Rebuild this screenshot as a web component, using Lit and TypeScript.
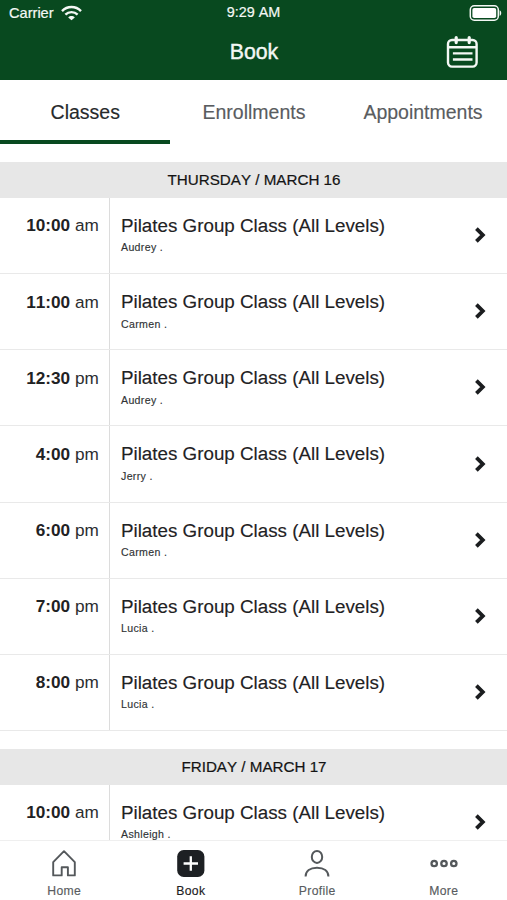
import { LitElement, html, css, svg } from "lit";
import { customElement, property } from "lit/decorators.js";
import { classMap } from "lit/directives/class-map.js";

interface Session {
  time: string;
  period: string;
  teacher: string;
}

const thursday: Session[] = [
  { time: "10:00", period: "am", teacher: "Audrey ." },
  { time: "11:00", period: "am", teacher: "Carmen ." },
  { time: "12:30", period: "pm", teacher: "Audrey ." },
  { time: "4:00", period: "pm", teacher: "Jerry ." },
  { time: "6:00", period: "pm", teacher: "Carmen ." },
  { time: "7:00", period: "pm", teacher: "Lucia ." },
  { time: "8:00", period: "pm", teacher: "Lucia ." },
];
const friday: Session[] = [{ time: "10:00", period: "am", teacher: "Ashleigh ." }];

@customElement("class-row")
class ClassRow extends LitElement {
  @property({ attribute: false }) session!: Session;

  static styles = css`
    :host {
      display: flex;
      height: 76.15px;
      box-sizing: border-box;
      border-bottom: 1px solid #e9e9e9;
      color: #1f2224;
    }
    .time {
      width: 110px;
      box-sizing: border-box;
      border-right: 1px solid #dcdcdc;
      padding: 16.4px 10.2px 0 0;
      text-align: right;
      font-size: 17.2px;
      line-height: 22px;
      color: #2b2d2f;
      white-space: nowrap;
    }
    .time b {
      color: #1f2224;
    }
    .info {
      flex: 1;
      padding: 16px 0 0 11px;
      white-space: nowrap;
    }
    .name {
      font-size: 18.8px;
      line-height: 24px;
      -webkit-text-stroke: 0.15px;
    }
    .teacher {
      margin-top: 2.4px;
      font-size: 10.6px;
      line-height: 14px;
      letter-spacing: 0.33px;
      color: #303335;
      -webkit-text-stroke: 0.15px;
    }
    .chevron {
      width: 12px;
      height: 18px;
      margin: 28.2px 21px 0 0;
    }
  `;

  render() {
    return html`
      <div class="time"><b>${this.session.time}</b> ${this.session.period}</div>
      <div class="info">
        <div class="name">Pilates Group Class (All Levels)</div>
        <div class="teacher">${this.session.teacher}</div>
      </div>
      <svg class="chevron" viewBox="0 0 12 18">
        <path d="M2.4 2.7 8.8 9 2.4 15.3" fill="none" stroke="#1b1d1f" stroke-width="3.8" />
      </svg>
    `;
  }
}

const homeIcon = svg`<path d="M4.2 13.2 15 2.2l10.8 11v13.2h-6.9v-8.2h-6.2v8.2H4.2z" fill="none" stroke="#54585b" stroke-width="1.9" stroke-linejoin="round"/>`;
const bookIcon = svg`<rect x="1.2" y="1" width="27.2" height="27" rx="6.5" fill="#1d2023"/><path d="M14.8 7.3v14.4M7.6 14.5H22" stroke="#fff" stroke-width="2.3"/>`;
const profileIcon = svg`<g fill="none" stroke="#54585b" stroke-width="2"><ellipse cx="15" cy="7.9" rx="5.2" ry="6"/><path d="M3.6 27.6c0-5.6 4.4-8.8 11.4-8.8s11.4 3.2 11.4 8.8"/></g>`;
const moreIcon = svg`<g fill="none" stroke="#54585b" stroke-width="2.3"><circle cx="5.2" cy="14.5" r="2.7"/><circle cx="15" cy="14.5" r="2.7"/><circle cx="24.8" cy="14.5" r="2.7"/></g>`;

@customElement("app-root")
class AppRoot extends LitElement {
  static styles = css`
    :host {
      display: flex;
      flex-direction: column;
      height: 900px;
      overflow: hidden;
      background: #fff;
      font-family: "Liberation Sans", Arial, sans-serif;
      font-kerning: none;
    }
    .header {
      flex: none;
      height: 80px;
      background: #08491f;
      color: #f4f8f5;
    }
    .status,
    .title-bar {
      display: grid;
      grid-template-columns: 1fr auto 1fr;
      align-items: center;
    }
    .status {
      height: 24px;
      padding: 1px 4px 0 9px;
      font-size: 14.4px;
      -webkit-text-stroke: 0.2px;
    }
    .clock {
      padding: 0 5px 2px 0;
    }
    .carrier {
      display: flex;
      align-items: center;
      gap: 7px;
      font-size: 14.6px;
    }
    .wifi {
      width: 21px;
      height: 16px;
    }
    .battery {
      width: 34px;
      height: 18px;
      justify-self: end;
    }
    .title-bar {
      height: 54px;
      padding-right: 28px;
      padding-left: 29px;
    }
    .title {
      grid-column: 2;
      font-size: 21.3px;
      -webkit-text-stroke: 0.4px;
    }
    .calendar {
      width: 33px;
      height: 33px;
      justify-self: end;
    }
    .tabs {
      flex: none;
      display: grid;
      grid-template-columns: repeat(3, 1fr);
      height: 64px;
      margin-bottom: 18px;
    }
    .tab {
      box-sizing: border-box;
      border-bottom: 4px solid transparent;
      padding: 20px 0 0 1px;
      text-align: center;
      font-size: 19.5px;
      line-height: 24px;
      color: #595c60;
      -webkit-text-stroke: 0.15px;
    }
    .tab.active {
      color: #26292b;
      border-color: #08491f;
      margin-right: -0.5px;
    }
    .schedule {
      flex: 1;
      min-height: 0;
      overflow: hidden;
    }
    .day {
      height: 36px;
      padding-left: 1px;
      background: #e7e7e7;
      color: #141414;
      font-size: 15.2px;
      line-height: 36px;
      text-align: center;
      -webkit-text-stroke: 0.2px;
    }
    .day.later {
      margin-top: 18px;
    }
    class-row {
      width: 100%;
    }
    .nav {
      flex: none;
      display: grid;
      grid-template-columns: repeat(4, 1fr);
      height: 60px;
      box-sizing: border-box;
      padding-left: 1px;
      border-top: 1px solid #efefef;
      background: #fff;
    }
    .item {
      display: flex;
      flex-direction: column;
      align-items: center;
      padding-top: 8px;
      color: #595c60;
      font-size: 12.2px;
      line-height: 16px;
      letter-spacing: 0.35px;
      -webkit-text-stroke: 0.15px;
    }
    .item.active {
      color: #1d2023;
    }
    .icon {
      width: 30px;
      height: 30px;
      margin-bottom: 4px;
    }
  `;

  private tab(label: string, active = false) {
    return html`<div class=${classMap({ tab: true, active })}>${label}</div>`;
  }

  private item(label: string, icon: unknown, active = false) {
    return html`<div class=${classMap({ item: true, active })}>
      <svg class="icon" viewBox="0 0 30 30">${icon}</svg>${label}
    </div>`;
  }

  render() {
    return html`
      <header class="header">
        <div class="status">
          <div class="carrier">
            Carrier
            <svg class="wifi" viewBox="0 0 21 16" fill="none" stroke="#f4f8f5" stroke-width="2.4">
              <path d="M1 6.1C6.3.6 14.7.6 20 6.1M4.4 9.7c3.4-3.5 8.8-3.5 12.2 0" />
              <path d="M10.5 15.3 7.2 12.4c1.9-1.9 4.7-1.9 6.6 0z" fill="#f4f8f5" stroke="none" />
            </svg>
          </div>
          <div class="clock">9:29 AM</div>
          <svg class="battery" viewBox="0 0 34 18">
            <rect x="1.3" y="1.8" width="28" height="14.4" rx="4" fill="none" stroke="#f4f8f5" stroke-width="1.5" />
            <rect x="3.4" y="3.9" width="23.8" height="10.2" rx="1.8" fill="#fff" />
            <path d="M30.6 6.2c2.2.6 2.2 5 0 5.6z" fill="#f4f8f5" />
          </svg>
        </div>
        <div class="title-bar">
          <div class="title">Book</div>
          <svg class="calendar" viewBox="0 0 33 33" fill="none" stroke="#f4f8f5" stroke-width="2.4">
            <rect x="2" y="4" width="28.6" height="26.6" rx="4" />
            <path d="M2 11.3h28.6M6.9 17.4h19.6M6.9 23.5h19.6" />
            <path d="M10.2 1.6v5M23.2 1.6v5" stroke-width="3.2" stroke-linecap="round" />
          </svg>
        </div>
      </header>
      <nav class="tabs">
        ${this.tab("Classes", true)}${this.tab("Enrollments")}${this.tab("Appointments")}
      </nav>
      <main class="schedule">
        <div class="day">THURSDAY / MARCH 16</div>
        ${thursday.map((s) => html`<class-row .session=${s}></class-row>`)}
        <div class="day later">FRIDAY / MARCH 17</div>
        ${friday.map((s) => html`<class-row .session=${s}></class-row>`)}
      </main>
      <nav class="nav">
        ${this.item("Home", homeIcon)}${this.item("Book", bookIcon, true)}
        ${this.item("Profile", profileIcon)}${this.item("More", moreIcon)}
      </nav>
    `;
  }
}
